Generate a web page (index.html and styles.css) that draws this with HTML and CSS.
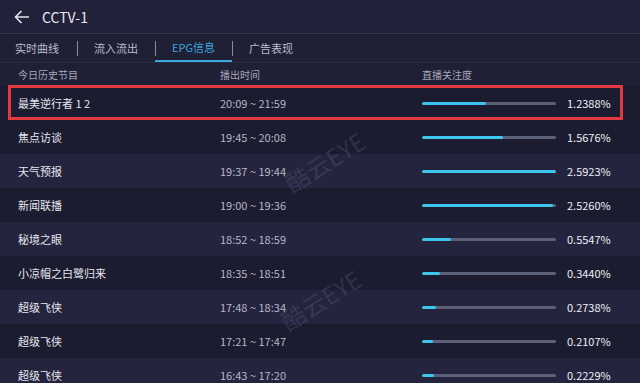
FILE: index.html
```html
<!DOCTYPE html>
<html lang="zh-CN">
<head>
  <meta charset="UTF-8">
  <title>CCTV-1</title>
  <link rel="stylesheet" href="styles.css">
</head>
<body>
  <div class="page">
    <div class="header">
      <svg class="back" width="16" height="14" viewBox="0 0 16 14">
        <path d="M15 7H1.5M7.5 1L1.5 7l6 6" fill="none" stroke="#e4e4ee" stroke-width="1.6"/>
      </svg>
      <span class="title">CCTV-1</span>
    </div>

    <div class="tabs">
      <div class="tab">实时曲线</div>
      <div class="tab">流入流出</div>
      <div class="tab active">EPG信息</div>
      <div class="tab">广告表现</div>
    </div>

    <div class="table">
      <div class="row head">
        <div class="col-name">今日历史节目</div>
        <div class="col-time">播出时间</div>
        <div class="col-rate">直播关注度</div>
      </div>

      <div class="row dark marked">
        <div class="col-name">最美逆行者 1 2</div>
        <div class="col-time">20:09 ~ 21:59</div>
        <div class="col-rate"><div class="bar"><div class="fill" style="width: 47.8%"></div></div><span class="pct">1.2388%</span></div>
      </div>
      <div class="row dark">
        <div class="col-name">焦点访谈</div>
        <div class="col-time">19:45 ~ 20:08</div>
        <div class="col-rate"><div class="bar"><div class="fill" style="width: 60.5%"></div></div><span class="pct">1.5676%</span></div>
      </div>
      <div class="row light">
        <div class="col-name">天气预报</div>
        <div class="col-time">19:37 ~ 19:44</div>
        <div class="col-rate"><div class="bar"><div class="fill" style="width: 100%"></div></div><span class="pct">2.5923%</span></div>
      </div>
      <div class="row dark">
        <div class="col-name">新闻联播</div>
        <div class="col-time">19:00 ~ 19:36</div>
        <div class="col-rate"><div class="bar"><div class="fill" style="width: 97.4%"></div></div><span class="pct">2.5260%</span></div>
      </div>
      <div class="row light">
        <div class="col-name">秘境之眼</div>
        <div class="col-time">18:52 ~ 18:59</div>
        <div class="col-rate"><div class="bar"><div class="fill" style="width: 21.4%"></div></div><span class="pct">0.5547%</span></div>
      </div>
      <div class="row dark">
        <div class="col-name">小凉帽之白鹭归来</div>
        <div class="col-time">18:35 ~ 18:51</div>
        <div class="col-rate"><div class="bar"><div class="fill" style="width: 13.3%"></div></div><span class="pct">0.3440%</span></div>
      </div>
      <div class="row light">
        <div class="col-name">超级飞侠</div>
        <div class="col-time">17:48 ~ 18:34</div>
        <div class="col-rate"><div class="bar"><div class="fill" style="width: 10.6%"></div></div><span class="pct">0.2738%</span></div>
      </div>
      <div class="row dark">
        <div class="col-name">超级飞侠</div>
        <div class="col-time">17:21 ~ 17:47</div>
        <div class="col-rate"><div class="bar"><div class="fill" style="width: 8.1%"></div></div><span class="pct">0.2107%</span></div>
      </div>
      <div class="row light">
        <div class="col-name">超级飞侠</div>
        <div class="col-time">16:43 ~ 17:20</div>
        <div class="col-rate"><div class="bar"><div class="fill" style="width: 8.6%"></div></div><span class="pct">0.2229%</span></div>
      </div>
    </div>

    <div class="watermark wm-1">酷云EYE</div>
    <div class="watermark wm-2">酷云EYE</div>
  </div>
</body>
</html>
```

FILE: styles.css
```css
body {
  margin: 0;
  background: #1f1f35;
  font-family: "Noto Sans CJK SC", "Open Sans", sans-serif;
  color: #e6e6ee;
  overflow: hidden;
}

.page {
  position: relative;
  width: 640px;
  height: 383px;
  overflow: hidden;
}

.header {
  height: 33px;
  display: flex;
  align-items: center;
  padding-left: 14px;
  border-bottom: 1px solid #35354d;
  background: #21213a;
}

.back {
  margin-right: 12px;
}

.title {
  font-size: 14px;
  color: #e8e8f0;
}

.tabs {
  height: 28px;
  display: flex;
  align-items: stretch;
  background: #1f1f36;
  border-bottom: 1px solid #2a2a42;
}

.tab {
  position: relative;
  display: flex;
  align-items: center;
  justify-content: center;
  width: 78px;
  font-size: 11px;
  color: #bcbccb;
  box-sizing: border-box;
}

.tab + .tab::before {
  content: "";
  position: absolute;
  left: 0;
  top: 7px;
  height: 15px;
  border-left: 1px solid #8a8aa0;
}

.tab:first-child {
  width: 77px;
  justify-content: flex-start;
  padding-left: 15px;
}

.tab.active {
  width: 77px;
  color: #3aa8dc;
  border-bottom: 2px solid #3aa8dc;
}

.row {
  position: relative;
  height: 34px;
  display: flex;
  align-items: center;
  font-size: 11px;
}

.row.head {
  height: 23px;
  font-size: 10px;
  color: #a6a6b6;
  background: #1f1f35;
}

.row.dark {
  background: #1c1c30;
}

.row.light {
  background: #24243e;
}

.row.marked::after {
  content: "";
  position: absolute;
  left: 8px;
  right: 17px;
  top: -1px;
  bottom: 0;
  border: 3px solid #e23a40;
}

.col-name {
  width: 220px;
  padding-left: 18px;
  box-sizing: border-box;
}

.col-time {
  width: 202px;
  color: #b6b6c6;
}

.row.head .col-time,
.row.head .col-rate {
  color: #a6a6b6;
}

.col-rate {
  display: flex;
  align-items: center;
}

.bar {
  width: 134px;
  height: 3px;
  border-radius: 2px;
  background: #5b6079;
  overflow: hidden;
}

.fill {
  height: 100%;
  border-radius: 2px;
  background: #3ec5ee;
}

.pct {
  margin-left: 11px;
  color: #eeeef4;
}

.watermark {
  position: absolute;
  font-size: 24px;
  color: rgba(200, 200, 230, 0.12);
  transform: rotate(-32deg);
  pointer-events: none;
  white-space: nowrap;
}

.wm-1 {
  left: 280px;
  top: 144px;
}

.wm-2 {
  left: 276px;
  top: 282px;
}
```
